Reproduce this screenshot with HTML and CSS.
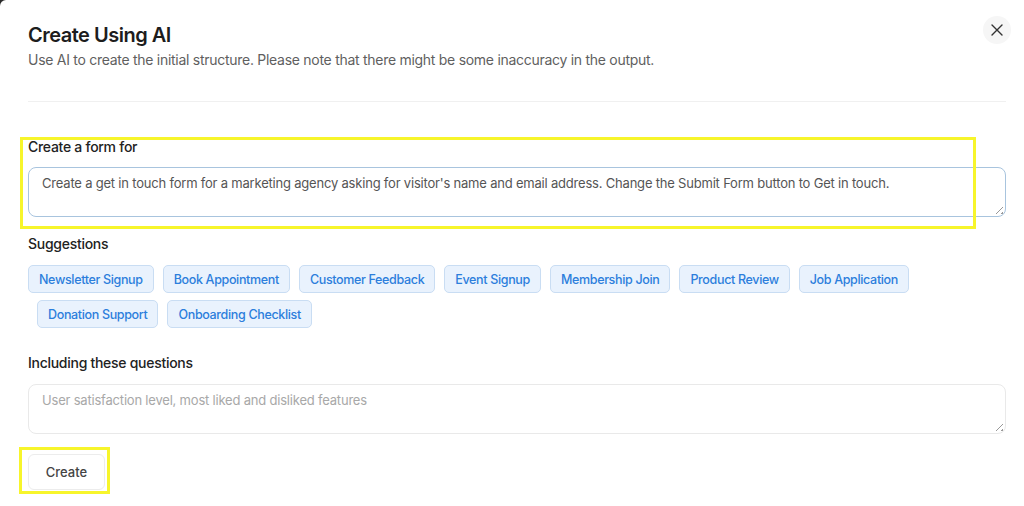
FILE: index.html
```html
<!DOCTYPE html>
<html lang="en">
<head>
<meta charset="utf-8">
<title>Create Using AI</title>
<link rel="stylesheet" href="styles.css">
</head>
<body>
<div class="modal">
  <button class="close" aria-label="Close">
    <svg width="14" height="14" viewBox="0 0 14 14"><path d="M2 2L12 12M12 2L2 12" stroke="#333" stroke-width="1.4" stroke-linecap="round"/></svg>
  </button>
  <header class="head">
    <h1 class="title">Create Using AI</h1>
    <p class="subtitle">Use AI to create the initial structure. Please note that there might be some inaccuracy in the output.</p>
  </header>
  <hr class="divider">
  <section class="field field-form">
    <label class="label">Create a form for</label>
    <div class="textarea focused">Create a get in touch form for a marketing agency asking for visitor's name and email address. Change the Submit Form button to Get in touch.<span class="grip"></span></div>
    <span class="highlight hl-form"></span>
  </section>
  <section class="field field-suggest">
    <label class="label">Suggestions</label>
    <div class="chips">
      <span class="chip">Newsletter Signup</span>
      <span class="chip">Book Appointment</span>
      <span class="chip">Customer Feedback</span>
      <span class="chip">Event Signup</span>
      <span class="chip">Membership Join</span>
      <span class="chip">Product Review</span>
      <span class="chip">Job Application</span>
    </div>
    <div class="chips chips-second">
      <span class="chip">Donation Support</span>
      <span class="chip">Onboarding Checklist</span>
    </div>
  </section>
  <section class="field field-questions">
    <label class="label">Including these questions</label>
    <div class="textarea placeholder">User satisfaction level, most liked and disliked features<span class="grip"></span></div>
  </section>
  <div class="actions">
    <button class="create">Create</button>
    <span class="highlight hl-create"></span>
  </div>
</div>
</body>
</html>
```
FILE: styles.css
```css
* { box-sizing: border-box; }
html, body { margin: 0; padding: 0; }
body {
  background: #2a2a2a;
  font-family: Inter, "Noto Sans", "Liberation Sans", sans-serif;
  color: #1f1f1f;
}
.modal {
  position: relative;
  background: #fff;
  width: 1024px;
  height: 506px;
  border-top-left-radius: 6px;
  padding: 22px 18px 0 28px;
  overflow: hidden;
}
.close {
  position: absolute;
  top: 16px;
  right: 13px;
  width: 28px;
  height: 28px;
  border-radius: 50%;
  border: 0;
  background: #f6f6f6;
  display: flex;
  align-items: center;
  justify-content: center;
  padding: 0;
}
.title {
  margin: 0;
  font-size: 20px;
  line-height: 26px;
  font-weight: 600;
  color: #1d1d1d;
  letter-spacing: -0.5px;
}
.subtitle {
  margin: 2px 0 0;
  font-size: 14px;
  line-height: 20px;
  color: #5f5f5f;
  letter-spacing: -0.28px;
}
.divider {
  border: 0;
  border-top: 1px solid #f0f0f0;
  margin: 31px 0 0;
}
.field { position: relative; }
.field-form { margin-top: 36px; }
.label {
  display: block;
  font-size: 14px;
  line-height: 18px;
  font-weight: 500;
  color: #222;
  letter-spacing: -0.28px;
}
.textarea {
  position: relative;
  margin-top: 11px;
  height: 50px;
  border: 1px solid #e9e9e9;
  border-radius: 8px;
  padding: 6px 13px;
  font-size: 13px;
  line-height: 19px;
  color: #555;
  letter-spacing: -0.2px;
}
.textarea.focused { border-color: #a8c4de; }
.textarea.placeholder { color: #a8a8a8; }
.grip {
  position: absolute;
  right: 2px;
  bottom: 2px;
  width: 7px;
  height: 7px;
  background:
    linear-gradient(135deg, transparent 45%, #999 45%, #999 55%, transparent 55%),
    linear-gradient(135deg, transparent 80%, #999 80%);
}
.field-suggest { margin-top: 18px; }
.chips {
  display: flex;
  flex-wrap: wrap;
  gap: 9px;
  margin-top: 12px;
}
.chips-second { margin-top: 7px; padding-left: 9px; }
.chip {
  display: inline-flex;
  align-items: center;
  height: 28px;
  padding: 0 10px;
  border: 1px solid #c9ddf3;
  border-radius: 5px;
  background: #e9f2fd;
  color: #2c7edc;
  font-size: 12.5px;
  font-weight: 500;
  letter-spacing: -0.34px;
}
.field-questions { margin-top: 26px; }
.field-questions .textarea { margin-top: 12px; }
.actions { position: relative; margin-top: 20px; }
.create {
  width: 77px;
  height: 36px;
  border: 1px solid #ececec;
  border-radius: 6px;
  background: #fff;
  font-family: inherit;
  font-size: 13px;
  font-weight: 500;
  color: #444;
}
.highlight {
  position: absolute;
  border: 3px solid #f7f52b;
  pointer-events: none;
}
.hl-form { left: -8px; top: -1px; width: 956px; height: 92px; }
.hl-create { left: -9px; top: -7px; width: 91px; height: 47px; }
```
